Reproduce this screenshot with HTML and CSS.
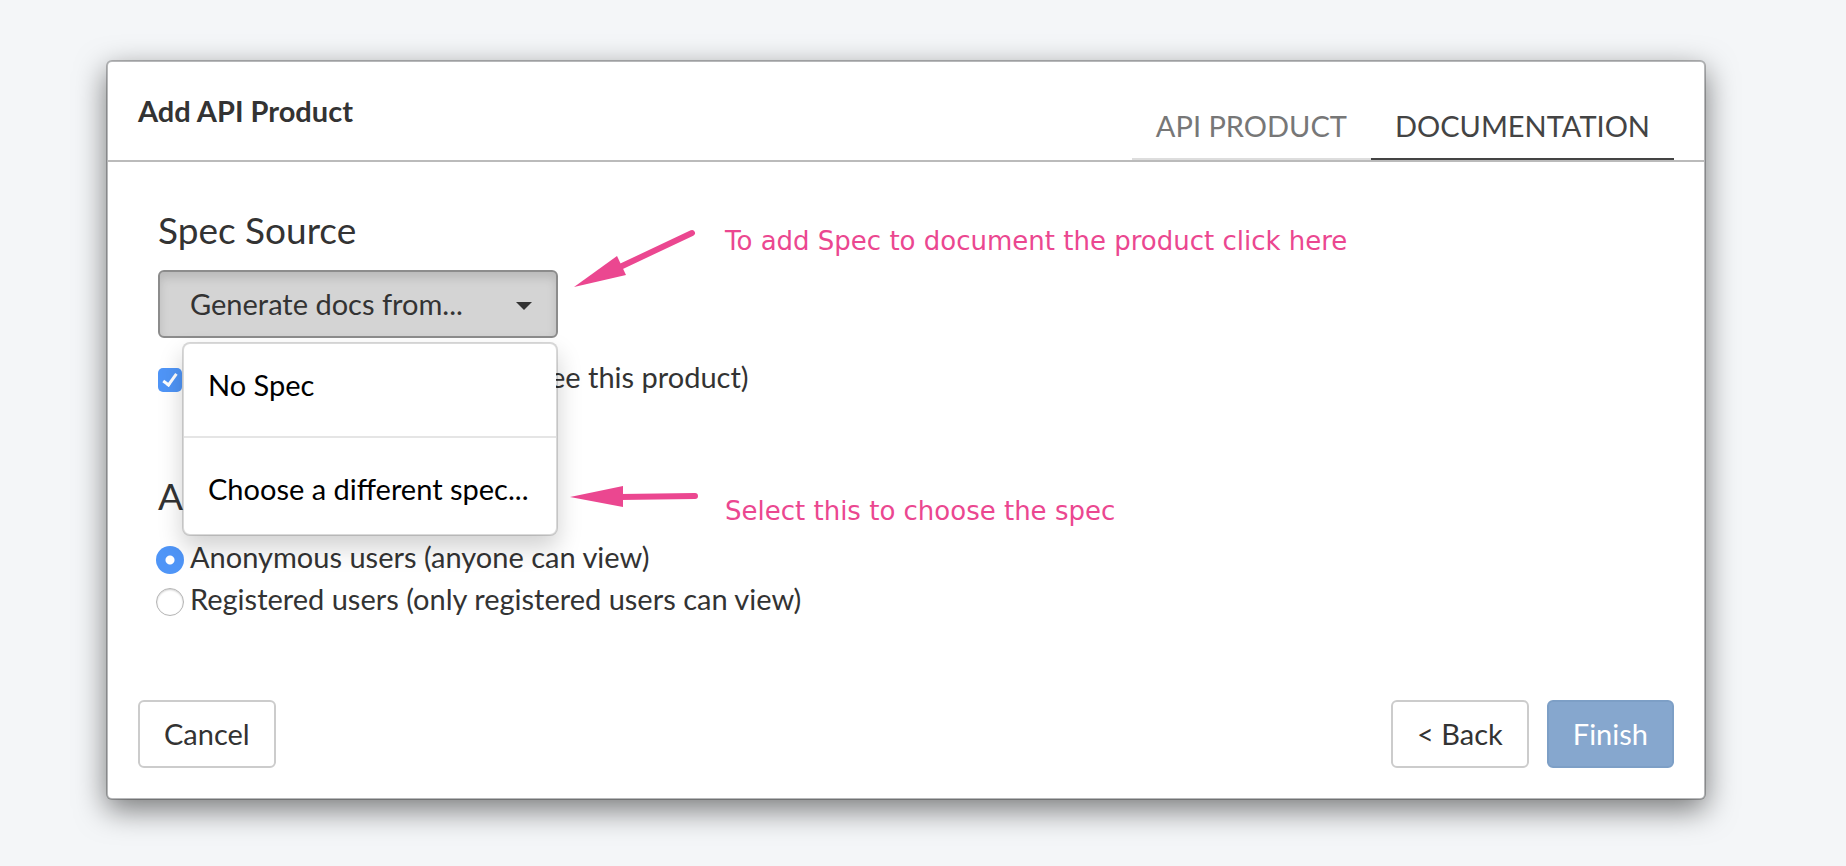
FILE: index.html
```html
<!DOCTYPE html>
<html lang="en">
<head>
<meta charset="utf-8">
<title>Add API Product</title>
<link rel="stylesheet" href="styles.css">
</head>
<body>
<main class="dialog">
  <header class="dialog-header">
    <h1 class="title">Add API Product</h1>
    <nav class="tabs">
      <a class="tab" href="#product">API PRODUCT</a>
      <a class="tab tab-active" href="#documentation">DOCUMENTATION</a>
    </nav>
  </header>
  <form class="dialog-body">
    <h2 class="section-title">Spec Source</h2>
    <div class="dropdown">
      <button class="dropdown-toggle" type="button" aria-expanded="true">
        <span>Generate docs from...</span>
        <svg class="caret" viewBox="0 0 16 8" aria-hidden="true"><path d="M0 0h16L8 8z"/></svg>
      </button>
      <div class="menu">
        <button class="menu-item" type="button">No Spec</button>
        <button class="menu-item menu-item-last" type="button">Choose a different spec...</button>
      </div>
    </div>
    <label class="option option-publish"><input class="check" type="checkbox" checked>Published (portal users can see this product)</label>
    <h2 class="section-title">Audience</h2>
    <div class="audience">
      <label class="option"><input class="radio" type="radio" name="audience" checked>Anonymous users (anyone can view)</label>
      <label class="option"><input class="radio" type="radio" name="audience">Registered users (only registered users can view)</label>
    </div>
    <svg class="arrow arrow-source" viewBox="0 0 130 60" aria-hidden="true"><path class="shaft" d="M118 6L46 40"/><path d="M0 60L43 29L52 48z"/></svg>
    <p class="note note-source">To add Spec to document the product click here</p>
    <svg class="arrow arrow-choose" viewBox="0 0 130 60" aria-hidden="true"><path class="shaft" d="M50 31L125 30"/><path d="M0 31L53 20V41z"/></svg>
    <p class="note note-choose">Select this to choose the spec</p>
  </form>
  <footer class="dialog-footer">
    <button class="btn" type="button">Cancel</button>
    <div class="actions">
      <button class="btn" type="button">&lt; Back</button>
      <button class="btn btn-primary" type="button">Finish</button>
    </div>
  </footer>
</main>
</body>
</html>
```
FILE: styles.css
```css
* { box-sizing: border-box; }
body {
  margin: 0;
  padding: 60px 140px 66px 106px;
  background: #f4f6f8;
  color: #333;
  font: 29px/42px Lato, "Open Sans", sans-serif;
}
button, input { font: inherit; color: inherit; margin: 0; }
.dialog {
  background: #fff;
  background-clip: padding-box;
  border: 2px solid rgba(0, 0, 0, 0.25);
  border-radius: 6px;
  box-shadow: 0 10px 30px rgba(0, 0, 0, 0.5);
}
.dialog-header {
  display: flex;
  justify-content: space-between;
  align-items: flex-end;
  height: 100px;
  padding: 0 30px;
  border-bottom: 2px solid #bbb;
}
.title { margin: 0; align-self: center; font-size: 29px; font-weight: 700; }
.tabs { display: flex; }
.tab {
  padding: 0 24px 11px;
  border-bottom: 2px solid #ddd;
  color: #777;
  text-decoration: none;
}
.tab-active { color: #444; border-color: #444; }
.dialog-body { position: relative; padding: 46px 50px 0; }
.section-title { margin: 0 0 18px; font-size: 37px; line-height: 44px; font-weight: 400; }
.dropdown { position: relative; width: 400px; }
.dropdown-toggle {
  display: flex;
  justify-content: space-between;
  align-items: center;
  width: 100%;
  height: 68px;
  padding: 0 24px 0 30px;
  background: #d4d4d4;
  border: 2px solid #8c8c8c;
  border-radius: 6px;
  box-shadow: inset 0 6px 10px rgba(0, 0, 0, 0.125);
}
.caret { width: 16px; height: 8px; margin-top: 4px; fill: #333; }
.menu {
  position: absolute;
  z-index: 1;
  top: 72px;
  right: 0;
  left: 24px;
  background: #fff;
  background-clip: padding-box;
  border: 2px solid rgba(0, 0, 0, 0.15);
  border-radius: 8px;
  box-shadow: 0 12px 24px rgba(0, 0, 0, 0.18);
}
.menu-item {
  display: block;
  width: 100%;
  padding: 20px 24px 30px;
  background: none;
  border: 0;
  color: #000;
  text-align: left;
  white-space: nowrap;
}
.menu-item-last { padding: 30px 24px 24px; border-top: 2px solid #e5e5e5; }
.option { display: flex; align-items: center; white-space: nowrap; }
.option-publish { margin: 18px 0 76px; }
.check {
  appearance: none;
  width: 24px;
  height: 24px;
  margin: 6px 8px 0 0;
  border-radius: 5px;
  background: #4f95f7;
}
.radio {
  appearance: none;
  width: 28px;
  height: 28px;
  margin: 6px 6px 0 -2px;
  border: 1px solid #b5b5b5;
  border-radius: 50%;
  background: #fff;
  box-shadow: inset 0 1px 2px rgba(0, 0, 0, 0.2);
}
.radio:checked {
  border: 0;
  background: radial-gradient(circle, #fff 4px, #4f95f7 5px);
  box-shadow: none;
}
.check::before {
  content: "";
  display: block;
  box-sizing: border-box;
  width: 8px;
  height: 15px;
  margin: 3px 0 0 8px;
  border: solid #fff;
  border-width: 0 3px 3px 0;
  transform: rotate(36deg);
}
.arrow { position: absolute; width: 130px; height: 60px; fill: #eb4790; }
.shaft { stroke: #eb4790; stroke-width: 6; stroke-linecap: round; }
.arrow-source { top: 65px; left: 466px; }
.arrow-choose { top: 304px; left: 462px; }
.note {
  position: absolute;
  left: 617px;
  margin: 0;
  color: #eb4790;
  font: 26px/32px "DejaVu Sans", sans-serif;
  white-space: nowrap;
}
.note-source { top: 63px; }
.note-choose { top: 333px; }
.dialog-footer {
  display: flex;
  justify-content: space-between;
  padding: 80px 30px 30px;
}
.actions { display: flex; gap: 18px; }
.btn {
  height: 68px;
  padding: 0 24px;
  background: #fff;
  border: 2px solid #ccc;
  border-radius: 6px;
}
.btn-primary { color: #fff; background: #86a7ce; border-color: #7d9fc6; }
```
